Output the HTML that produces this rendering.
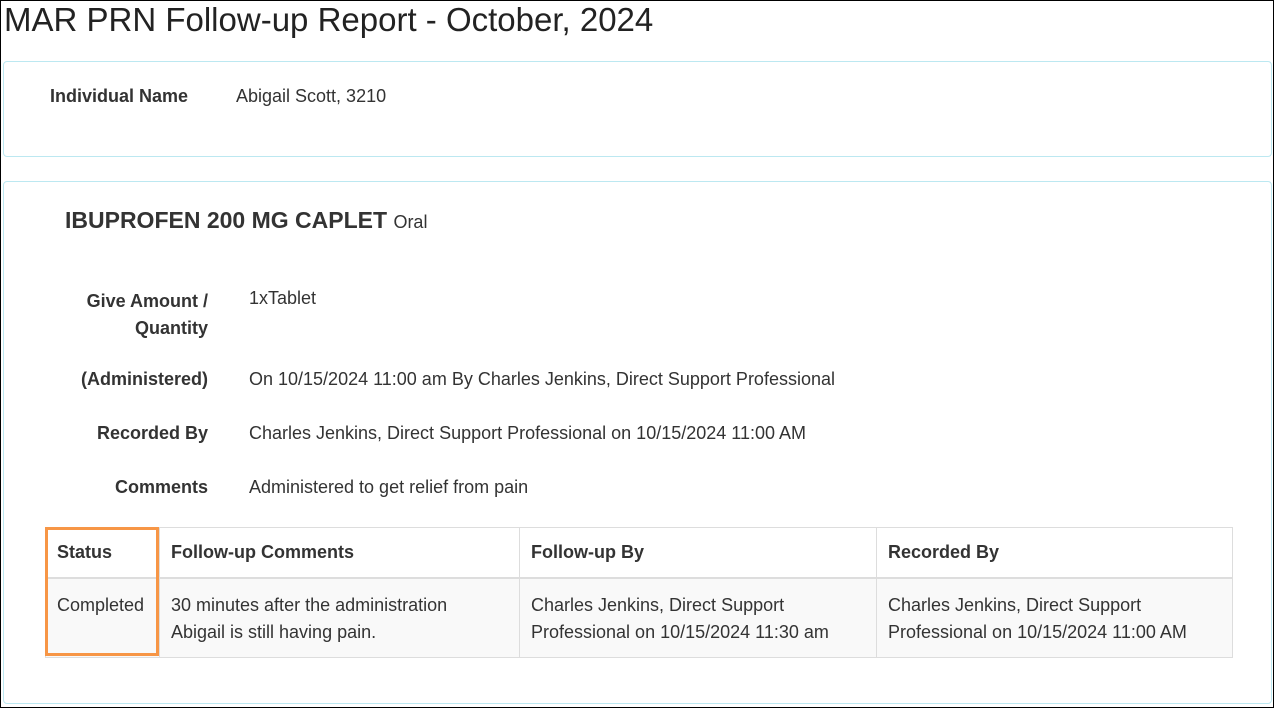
<!DOCTYPE html>
<html><head><style>
body{margin:0;width:1274px;height:708px;overflow:hidden;font-family:"Liberation Sans",sans-serif;color:#333;background:#fff;}
.frame{position:absolute;left:0;top:0;width:1272px;height:706px;border:1px solid #000;}
.abs{position:absolute;white-space:nowrap;}
h1{position:absolute;left:4px;top:1px;margin:0;font-weight:normal;font-size:33px;color:#222;}
.panel{position:absolute;border:1px solid #bce8f1;border-radius:4px;background:#fff;}
.lbl{font-weight:bold;font-size:18px;text-align:right;}
.val{font-size:18px;}
table{position:absolute;left:45px;top:527px;border-collapse:collapse;font-size:18px;}
td,th{border:1px solid #ddd;padding:0 11px;text-align:left;vertical-align:top;}
th{height:49px;vertical-align:middle;border-bottom:2px solid #ddd;}
tbody td{background:#f9f9f9;line-height:27px;padding-top:13px;padding-bottom:11px;}
.box{position:absolute;left:45px;top:527px;width:108px;height:123px;border:3px solid #f79646;}
</style></head><body>
<div class="frame"></div>
<h1>MAR PRN Follow-up Report - October, 2024</h1>
<div class="panel" style="left:3px;top:61px;width:1267px;height:94px;"></div>
<div class="abs lbl" style="left:50px;top:86px;">Individual Name</div>
<div class="abs val" style="left:236px;top:86px;">Abigail Scott, 3210</div>
<div class="panel" style="left:3px;top:181px;width:1267px;height:521px;"></div>
<div class="abs" style="left:65px;top:207px;font-size:23px;font-weight:bold;">IBUPROFEN 200 MG CAPLET <span style="font-weight:normal;font-size:18px;">Oral</span></div>
<div class="abs lbl" style="left:60px;width:148px;top:288px;line-height:27px;white-space:normal;">Give Amount / Quantity</div>
<div class="abs val" style="left:249px;top:288px;">1xTablet</div>
<div class="abs lbl" style="right:1066px;top:369px;">(Administered)</div>
<div class="abs val" style="left:249px;top:369px;">On 10/15/2024 11:00 am By Charles Jenkins, Direct Support Professional</div>
<div class="abs lbl" style="right:1066px;top:423px;">Recorded By</div>
<div class="abs val" style="left:249px;top:423px;">Charles Jenkins, Direct Support Professional on 10/15/2024 11:00 AM</div>
<div class="abs lbl" style="right:1066px;top:477px;">Comments</div>
<div class="abs val" style="left:249px;top:477px;">Administered to get relief from pain</div>
<table>
<thead><tr><th style="width:91px">Status</th><th style="width:337px">Follow-up Comments</th><th style="width:334px">Follow-up By</th><th style="width:333px">Recorded By</th></tr></thead>
<tbody><tr><td>Completed</td><td>30 minutes after the administration<br>Abigail is still having pain.</td><td>Charles Jenkins, Direct Support<br>Professional on 10/15/2024 11:30 am</td><td>Charles Jenkins, Direct Support<br>Professional on 10/15/2024 11:00 AM</td></tr></tbody>
</table>
<div class="box"></div>
</body></html>
